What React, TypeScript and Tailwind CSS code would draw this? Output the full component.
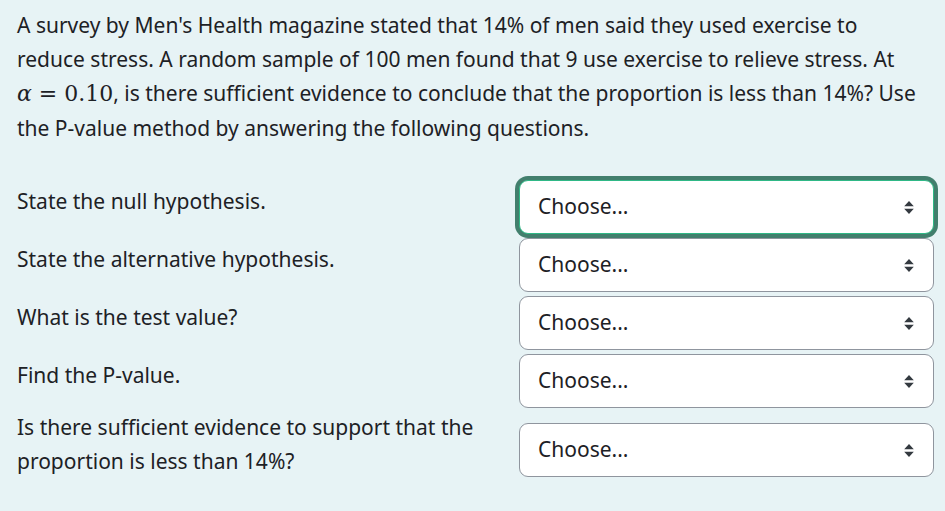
import React from "react";

const FONT = { fontFamily: '"Noto Sans", "Open Sans", sans-serif' };

const Arrows = () => (
  <svg width="12" height="15" viewBox="0 0 4 5" className="shrink-0">
    <path d="M2 0.3L0.4 2.1h3.2zM2 4.7L0.4 2.9h3.2z" fill="#343a40" />
  </svg>
);

const ChooseBox = ({ focused }: { focused?: boolean }) => (
  <div
    className={
      "w-[415px] h-[54px] shrink-0 bg-white rounded-[9px] flex items-center justify-between pl-[18px] pr-[18px] text-[21px] text-[#1d2125] " +
      (focused
        ? "border border-[#2fb886] shadow-[0_0_0_4px_#427f6d]"
        : "border border-[#8f959e]")
    }
  >
    <span>Choose...</span>
    <Arrows />
  </div>
);

const rows: { label: React.ReactNode; focused?: boolean }[] = [
  { label: "State the null hypothesis.", focused: true },
  { label: "State the alternative hypothesis." },
  { label: "What is the test value?" },
  { label: "Find the P-value." },
  {
    label: (
      <>
        Is there sufficient evidence to support that the
        <br />
        proportion is less than 14%?
      </>
    ),
  },
];

export default function App() {
  return (
    <div
      className="w-[945px] h-[511px] bg-[#e7f3f5] text-[#1d2125] pl-[17px] pr-[11px] pt-[8px] overflow-hidden"
      style={FONT}
    >
      <p className="text-[21px] leading-[34px] whitespace-nowrap">
        A survey by Men's Health magazine stated that 14% of men said they used exercise to
        <br />
        reduce stress. A random sample of 100 men found that 9 use exercise to relieve stress. At
        <br />
        <span
          className="text-[22px]"
          style={{ fontFamily: '"DejaVu Serif", "Liberation Serif", serif' }}
        >
          <i>α</i> = 0.10
        </span>
        , is there sufficient evidence to conclude that the proportion is less than 14%? Use
        <br />
        the P-value method by answering the following questions.
      </p>

      <div className="mt-[35px] flex flex-col gap-[4px]">
        {rows.map((r, i) => (
          <div key={i} className={"flex items-center" + (i === 4 ? " -mt-[2px]" : "")}>
            <div className="flex-1 text-[21px] leading-[34px] pb-[12px]">{r.label}</div>
            <ChooseBox focused={r.focused} />
          </div>
        ))}
      </div>
    </div>
  );
}
